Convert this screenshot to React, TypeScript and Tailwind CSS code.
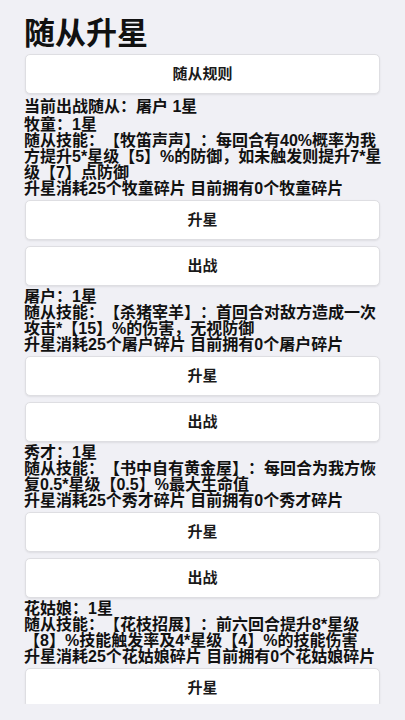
import React from 'react';

interface Follower {
  name: string;
  star: number;
  skill: string;
}

const FOLLOWERS: Follower[] = [
  { name: '牧童', star: 1, skill: '【牧笛声声】：每回合有40%概率为我方提升5*星级【5】%的防御，如未触发则提升7*星级【7】点防御' },
  { name: '屠户', star: 1, skill: '【杀猪宰羊】：首回合对敌方造成一次攻击*【15】%的伤害，无视防御' },
  { name: '秀才', star: 1, skill: '【书中自有黄金屋】：每回合为我方恢复0.5*星级【0.5】%最大生命值' },
  { name: '花姑娘', star: 1, skill: '【花枝招展】：前六回合提升8*星级【8】%技能触发率及4*星级【4】%的技能伤害' },
];

function Btn({ label, className = '' }: { label: string; className?: string }) {
  return (
    <button className={`mx-px flex h-10 w-[calc(100%-2px)] items-center justify-center rounded-[5px] border border-[#dedee2] bg-white text-[15px] font-bold text-[#1a1a1a] shadow-[0_1px_2px_rgba(0,0,0,0.08)] ${className}`}>
      {label}
    </button>
  );
}

export default function App() {
  return (
    <div
      className="h-[720px] w-[405px] overflow-hidden bg-[#f0f0f5] text-[#111] [text-spacing-trim:space-all]"
      style={{ fontFamily: '"Liberation Sans", "Noto Sans CJK SC", sans-serif' }}
    >
      <div className="h-[704px] overflow-hidden px-6 pt-[14px]">
        <h1 className="text-[31px] font-bold leading-[39px]">随从升星</h1>
        <Btn label="随从规则" className="mt-px" />
        <p className="mt-[5px] mb-0.5 text-[16px] font-bold leading-4">当前出战随从：屠户 1星</p>

        {FOLLOWERS.map((f) => (
          <div key={f.name} className="pb-[3px]">
            <div className="-mr-1 text-[16px] font-bold leading-4">
              <p>{f.name}：{f.star}星</p>
              <p>随从技能：{f.skill}</p>
              <p>升星消耗25个{f.name}碎片 目前拥有0个{f.name}碎片</p>
            </div>
            <Btn label="升星" className="mt-[3px]" />
            <Btn label="出战" className="mt-1.5" />
          </div>
        ))}
      </div>
    </div>
  );
}
